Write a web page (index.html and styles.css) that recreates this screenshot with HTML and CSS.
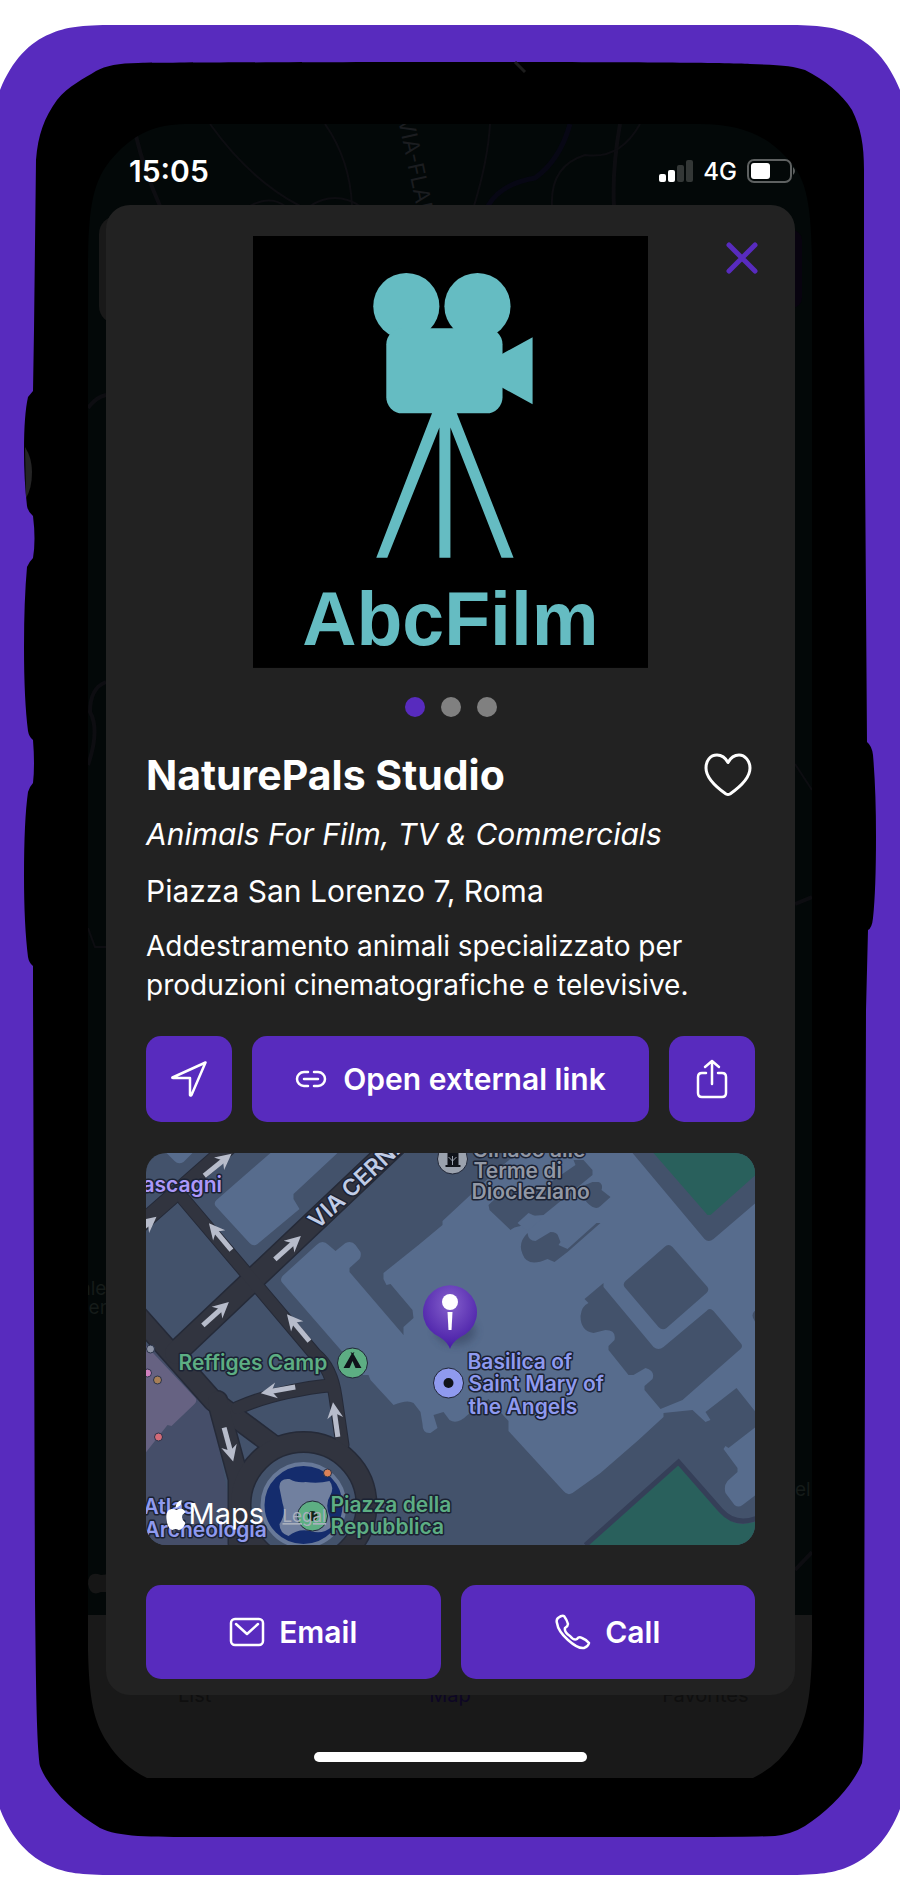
FILE: index.html
```html
<!DOCTYPE html>
<html lang="en">
<head>
<meta charset="utf-8">
<meta name="viewport" content="width=device-width, initial-scale=1">
<title>NaturePals Studio</title>
<link rel="stylesheet" href="styles.css">
</head>
<body>
<div class="stage">
  <svg class="device" viewBox="0 0 900 1900" preserveAspectRatio="none" aria-hidden="true">
    <path fill="#582bbe" d="M0 90C12 60 30 42 50 34C66 27 80 25 115 25H785C820 25 834 27 850 34C870 42 888 60 900 90V1809C888 1840 870 1857 850 1866C834 1873 820 1875 785 1875H115C80 1875 66 1873 50 1866C30 1857 12 1840 0 1809Z"/>
    <path fill="#000" d="M138 63C250 62 700 61 750 64C780 65 794 66 805 70C825 80 842 94 852 110C861 128 864 145 864 170V320L867 742Q872 746 873 755Q876 790 876 836Q876 890 873 918Q872 928 868 930L866 1010L864 1700Q864 1745 862 1763C853 1785 830 1810 805 1826Q792 1834 775 1836Q750 1837 700 1837H200C150 1837 118 1837 100 1828C70 1810 48 1787 40 1766C37 1745 36 1700 35 1600L33 990V966Q29 963 28 957Q24 925 24 876Q24 820 28 792Q30 786 33 783Q35 765 33 740Q29 737 28 731Q24 700 24 647Q24 600 27 567Q29 562 33 558Q36 540 33 516Q28 512 27 506Q24 480 24 450Q24 415 28 397L33 391L34 330L36 160C38 135 44 118 57 100C68 86 85 78 96 71Q110 63 138 63Z"/>
    <path fill="#242424" d="M25 447Q32 458 32 472Q32 488 26 498Z"/>
    <path stroke="#1c1c1c" stroke-width="3" d="M515 62L525 72"/>
    <clipPath id="glass"><path d="M190 124H700C740 124 765 135 785 156C806 176 811 200 812 260V1650C811 1700 806 1722 793 1742Q778 1766 753 1778H147Q122 1766 107 1742C94 1722 89 1700 88 1650V260C89 200 94 176 118 152C140 130 160 124 190 124Z"/></clipPath>
    <g clip-path="url(#glass)">
      <rect x="88" y="124" width="724" height="1500" fill="#030808"/>
      <g fill="none" stroke="#0d0d11" stroke-width="2">
        <path stroke-width="4" d="M136 136Q144 170 160 206M620 124Q612 170 614 206M88 408Q96 397 106 395M106 682Q90 688 90 712Q100 730 88 765M795 904L812 897M795 1570L812 1552"/>
        <path d="M210 124Q250 180 300 206M325 124Q350 160 352 206M490 124Q488 160 474 206M640 124Q620 160 585 155Q550 166 552 206M250 206Q270 195 285 206M310 206Q335 190 360 206M88 928L95 947H106M795 764L812 790"/>
        <path stroke="#070714" stroke-width="5" d="M570 124Q560 160 535 178Q500 184 488 206"/>
      </g>
      <text class="street" transform="translate(398 120) rotate(78)">VIA-FLAMINIA</text>
      <rect x="99" y="216" width="40" height="108" rx="18" fill="#191919"/>
      <rect x="780" y="230" width="22" height="78" rx="10" fill="#08030f"/>
      <text class="faint-place" x="80" y="1295">ale</text>
      <text class="faint-place" x="84" y="1314">len</text>
      <text class="faint-place" x="795" y="1496">el</text>
      <path fill="#161616" d="M101 1575Q88 1570 88 1584Q90 1597 101 1592H110V1574Z"/>
      <rect x="88" y="1615" width="724" height="170" fill="#191919"/>
    </g>
  </svg>

  <header class="status">
    <time class="clock">15:05</time>
    <div class="signals">
      <svg width="34" height="22" viewBox="0 0 34 22" aria-hidden="true"><rect y="14" width="7" height="8" rx="2" fill="#fff"/><rect x="9" y="10" width="7" height="12" rx="2" fill="#fff"/><rect x="18" y="5" width="7" height="17" rx="2" fill="#333736"/><rect x="27" y="0" width="7" height="22" rx="2" fill="#333736"/></svg>
      <span>4G</span>
      <svg width="50" height="24" viewBox="0 0 50 24" aria-hidden="true"><rect x="1" y="1" width="43" height="22" rx="6" fill="none" stroke="#5e6161" stroke-width="2"/><rect x="4" y="4" width="19" height="16" rx="3" fill="#fff"/><path fill="#5e6161" d="M46 8Q50 12 46 16Z"/></svg>
    </div>
  </header>

  <main class="sheet">
    <div class="gallery">
      <svg class="logo" viewBox="0 0 395 431" role="img" aria-label="AbcFilm">
        <rect width="395" height="431" fill="#000"/>
        <g fill="#65bcc2">
          <circle cx="153" cy="70" r="33"/><circle cx="224" cy="70" r="33"/>
          <rect x="133" y="92" width="116" height="85" rx="16"/>
          <path d="M248 118L279 101V168L248 151ZM179 176H203L260 321H248L197 191V321H186V191L134 321H123Z"/>
          <text class="wordmark" x="197" y="408" text-anchor="middle">AbcFilm</text>
        </g>
      </svg>
      <button class="close" type="button" aria-label="Close"><svg width="32" height="32" viewBox="0 0 32 32"><path d="M3 3L29 29M29 3L3 29" stroke="#582bbe" stroke-width="5" stroke-linecap="round"/></svg></button>
    </div>
    <div class="dots"><i class="dot dot-on"></i><i class="dot"></i><i class="dot"></i></div>

    <div class="title-row">
      <h1>NaturePals Studio</h1>
      <button class="heart" type="button" aria-label="Add to favorites"><svg width="48" height="44" viewBox="0 0 48 44"><path d="M24 9.500C21 4 17 2 13 2C6 2 2 8 2 15C2 25 12 34 22 41Q24 42 26 41C36 34 46 25 46 15C46 8 41 2 35 2C31 2 27 4 24 9.500Z" fill="none" stroke="#fff" stroke-width="3" stroke-linejoin="round"/></svg></button>
    </div>
    <p class="category">Animals For Film, TV &amp; Commercials</p>
    <p class="address">Piazza San Lorenzo 7, Roma</p>
    <p class="about">Addestramento animali specializzato per produzioni cinematografiche e televisive.</p>

    <div class="actions">
      <button class="btn" type="button" aria-label="Directions"><svg width="36" height="36" viewBox="0 0 36 36"><path d="M34.500 1.500L1.500 16.500Q1 17 2 17H19V34Q20 35 20.500 34Z" fill="none" stroke="#fff" stroke-width="2.500" stroke-linejoin="round"/></svg></button>
      <button class="btn" type="button"><svg width="32" height="18" viewBox="0 0 32 18"><path d="M13 2H9A7 7 0 0 0 9 16H13M19 2H23A7 7 0 0 1 23 16H19M9 9H23" fill="none" stroke="#fff" stroke-width="2.500" stroke-linecap="round"/></svg>Open external link</button>
      <button class="btn" type="button" aria-label="Share"><svg width="32" height="40" viewBox="0 0 32 40"><path d="M10 14H6Q2 14 2 18V34Q2 38 6 38H26Q30 38 30 34V18Q30 14 26 14H22M16 25V2M9 8L16 2L23 8" fill="none" stroke="#fff" stroke-width="2.500" stroke-linecap="round" stroke-linejoin="round"/></svg></button>
    </div>

    <svg class="map" viewBox="0 0 610 392" preserveAspectRatio="xMidYMid slice" role="img" aria-label="Map of Piazza della Repubblica">
      <defs>
        <radialGradient id="pin" cx="50%" cy="30%" r="65%"><stop offset="0" stop-color="#8560cc"/><stop offset="1" stop-color="#4a1fa8"/></radialGradient>
        <filter id="soft" x="-50%" y="-50%" width="200%" height="200%"><feGaussianBlur stdDeviation="4"/></filter>
        <g id="arrow"><path d="M-17 0H10" stroke="#b7bccb" stroke-width="5"/><path d="M18 0L2 -8L7 0L2 8Z" fill="#b7bccb"/></g>
      </defs>
      <rect width="610" height="392" fill="#43526b"/>
      <g fill="#576c8d">
        <path d="M21 0H47L38 9Q33 12 29 8ZM125 0H192L148 41V46L154 56L112 91Q108 94 104 90L70 53Q68 50 71 47Z"/>
        <path d="M137 123L171 92Q177 86 183 92L190 98L200 90Q206 87 210 92L215 99Q216 103 214 106L204 115V119L258 182V174L268 165L267 157L245 131L241 132L238 126V120L273 92L297 72V68L355 14L372 0H487L559 86Q563 90 568 86L610 50V259L591 235L560 259L565 267L560 269L547 257L518 260V264L493 287L455 320L427 340Q422 343 418 338L363 278V268L343 246L322 262Q312 272 304 267L298 259L288 262L292 275L285 280Q277 281 277 271L275 259L268 250Q262 246 248 252L225 227L223 222L217 222L137 130Q134 127 137 123Z"/>
        <path d="M610 274L583 295L580 293L578 296L592 315V319L582 328Q578 333 580 340L589 352Q593 355 597 352L610 342Z"/>
      </g>
      <g fill="#43526b">
        <path d="M343 52L362 34L398 34L430 12L428 7H438L447 17V22L398 62L385 63L375 73Q368 74 365 77L344 57ZM447 29H453Q458 31 456 37L465 44L455 53Q450 58 442 50L430 36ZM382 80Q383 88 390 88L405 79Q412 79 413 84L415 89L413 92L422 96L451 70H455L422 99L409 109L402 106Q382 115 377 101Q372 90 382 80Z"/>
        <path d="M383 60L372 70L382 78L396 66Z" fill="#576c8d"/>
        <path d="M519 94Q523 90 527 94L562 134Q564 137 561 140L521 175Q517 178 513 174L479 134Q477 131 480 128ZM458 130V134L508 194Q513 198 518 194L561 158Q564 154 568 158L595 190Q598 193 595 196L537 247L515 256L499 237V233L507 226Q510 218 500 215L488 222H483L463 197V193L469 187Q471 177 460 177L448 180Q435 178 435 163Q436 153 443 150L439 146Z"/>
        <path d="M610 157Q604 162 610 169Z"/>
      </g>
      <g fill="#29605c"><path d="M508 0H610V22L565 62H562ZM443 392L533 312L572 357Q585 371 597 371L610 369V392Z"/></g>
      <path d="M440 392L533 309L575 357Q590 374 612 365" fill="none" stroke="#353f58" stroke-width="5"/>
      <path d="M0 190L64 247L80 330L90 392H0Z" fill="#454e69"/>
      <path d="M0 192L50 245Q52 248 49 251L26 273L22 272L0 300Z" fill="#666282"/>
      <g fill="none" stroke-linecap="round" stroke-linejoin="round">
        <g stroke="#252a38">
          <path stroke-width="22" d="M-12 158L68 248L130 294"/><path stroke-width="24" d="M30 200L254 -12"/><path stroke-width="17" d="M-8 74L90 -12"/><path stroke-width="14" d="M38 46L110 131L170 202Q186 215 190 244L197 292M187 232Q130 238 92 255"/><path stroke-width="22" d="M72 248L93 326V390"/><circle cx="158" cy="352" r="63" stroke-width="22"/>
        </g>
        <g stroke="#31343f">
          <path stroke-width="19" d="M-12 158L68 248L130 294"/><path stroke-width="21" d="M30 200L254 -12"/><path stroke-width="15" d="M-8 74L90 -12"/><path stroke-width="12" d="M38 46L110 131L170 202Q186 215 190 244L197 292M187 232Q130 238 92 255"/><path stroke-width="19" d="M72 248L93 326V390"/><circle cx="158" cy="352" r="63" stroke-width="19"/>
        </g>
      </g>
      <circle cx="158" cy="352" r="41" fill="#142c6d" stroke="#687998" stroke-width="4"/>
      <path fill="#71809f" d="M134 335Q133 325 144 326Q151 330 160 329Q173 331 184 328Q189 334 185 342Q179 351 184 363L186 374Q177 382 165 378Q153 375 143 383Q134 380 134 371Q141 361 137 350Z"/>
      <use href="#arrow" transform="translate(72 12) rotate(-39)"/><use href="#arrow" transform="translate(-3 75) rotate(-39)"/>
      <use href="#arrow" transform="translate(75 84) rotate(-130)"/><use href="#arrow" transform="translate(142 95) rotate(-42)"/>
      <use href="#arrow" transform="translate(70 161) rotate(-42)"/><use href="#arrow" transform="translate(153 175) rotate(-130)"/>
      <use href="#arrow" transform="translate(133 237) rotate(170)"/><use href="#arrow" transform="translate(83 291) rotate(75)"/><use href="#arrow" transform="translate(190 267) rotate(-98)"/>
      <g stroke="#29334a"><circle cx="5" cy="196" r="4" fill="#8c93a5"/><circle cx="2" cy="220" r="4" fill="#cf80be"/><circle cx="12" cy="227" r="4" fill="#a87f56"/><circle cx="13" cy="284" r="4" fill="#d46b78"/><circle cx="182" cy="320" r="4" fill="#dc8157"/></g>
      <g stroke="#202637"><circle cx="307" cy="6" r="15" fill="#9ba2ae"/><circle cx="207" cy="210" r="15" fill="#5dae83"/><circle cx="303" cy="230" r="15" fill="#8f9aef"/><circle cx="167" cy="363" r="15" fill="#5dae83"/></g>
      <path d="M300 14H315V12H313V0H302V12H300ZM198 215L206 201L205 199L207 200L209 199L208 201L216 215Z" fill="#10131a"/><path d="M307 12V3M303 4L307 8L311 4" stroke="#9ba2ae" fill="none"/><path fill="#5dae83" d="M204 215L207 208L210 215Z"/>
      <circle cx="303" cy="230" r="5" fill="#10131a"/><circle cx="167" cy="363" r="5" fill="#10251a"/>
      <g class="labels">
        <text x="-3" y="39" fill="#ac98fa">ascagni</text>
        <text class="road" x="172" y="77" transform="rotate(-43 172 77)">VIA CERNAIA</text>
        <g fill="#9298a5"><text x="327" y="4">Ciriaco alle</text><text x="328" y="25">Terme di</text><text x="326" y="46">Diocleziano</text></g>
        <text x="33" y="217" fill="#5dae83">Reffiges Camp</text>
        <g fill="#8f9aef"><text x="322" y="216">Basilica of</text><text x="323" y="238">Saint Mary of</text><text x="323" y="261">the Angels</text><text x="-2" y="361">Atlas</text><text x="-1" y="384">Archeologia</text></g>
        <g fill="#5dae83"><text x="185" y="359">Piazza della</text><text x="185" y="381">Repubblica</text></g>
      </g>
      <text class="legal" x="137" y="369" text-decoration="underline">Legal</text>
      <path fill="#fff" d="M31 357Q34 355 37 356Q39 357 40 359Q33 364 40 370Q37 377 33 377Q30 375 27 377Q22 376 21 366Q20 357 26 356Q29 356 31 357ZM30 355Q30 349 36 347Q37 353 30 355Z"/>
      <text class="brand" x="43" y="371">Maps</text>
      <ellipse cx="310" cy="178" rx="20" ry="14" fill="#26314b" opacity=".4" filter="url(#soft)"/>
      <path fill="url(#pin)" d="M304.500 196Q302 189 294 184A27 27 0 1 1 315 184Q307 189 304.500 196Z"/>
      <circle cx="304.500" cy="149" r="8" fill="#fff"/><path fill="#fff" d="M302 159H307L306 177H303Z"/>
    </svg>

    <div class="contacts">
      <button class="btn" type="button"><svg width="36" height="30" viewBox="0 0 36 30"><rect x="2" y="2" width="32" height="26" rx="4" fill="none" stroke="#fff" stroke-width="2.500"/><path d="M7 7L18 17L29 7" fill="none" stroke="#fff" stroke-width="2.500" stroke-linecap="round" stroke-linejoin="round"/></svg>Email</button>
      <button class="btn" type="button"><svg width="36" height="36" viewBox="0 0 36 36"><path d="M3 4Q7 1 9 2Q12 6 13 10Q13 12 10 14Q9 18 15 22Q19 27 22 25Q24 22 27 24Q32 26 34 29Q33 33 29 34Q23 35 13 26Q3 17 2 9Q1 6 3 4Z" fill="none" stroke="#fff" stroke-width="2.500" stroke-linejoin="round"/></svg>Call</button>
    </div>
  </main>
  <nav class="tabs" aria-label="Tabs"><span>List</span><span class="tab-on">Map</span><span>Favorites</span></nav>
  <div class="home"></div>
</div>
</body>
</html>
```
FILE: styles.css
```css
* { box-sizing: border-box; }
body { margin: 0; background: #fff; color: #fff; font-family: Inter, Roboto, sans-serif; }
h1, p { margin: 0; }
button { margin: 0; padding: 0; border: 0; background: none; color: inherit; font: inherit; }
button svg { display: block; flex: none; }

.stage { position: relative; min-height: 100vh; padding: 152px 0 138px; overflow: hidden; }
.device { position: absolute; inset: 0; width: 100%; height: 100%; z-index: -1; }
.street { fill: #1b1d20; font-size: 22px; }
.faint-place { fill: #151b19; font-size: 19px; }

.status { display: flex; justify-content: space-between; align-items: center; height: 38px; margin: 0 103px 0 129px; }
.clock { font-size: 30px; font-weight: 600; }
.signals { display: flex; align-items: center; gap: 10px; font-size: 24px; font-weight: 500; }

.sheet { position: relative; margin: 15px 105px 0 106px; padding: 31px 40px 16px; background: #222; border-radius: 24px; }
.gallery { display: flex; justify-content: center; }
.logo { display: block; width: 65%; height: auto; }
.wordmark { font-family: "Liberation Sans", Arial, sans-serif; font-weight: 700; font-size: 75px; }
.close { position: absolute; top: 37px; right: 37px; }
.dots { display: flex; justify-content: center; gap: 16px; margin-top: 29px; }
.dot { width: 20px; height: 20px; border-radius: 50%; background: #808080; }
.dot-on { background: #582bbe; }

.title-row { display: flex; justify-content: space-between; align-items: center; height: 48px; margin-top: 34px; }
h1 { font-size: 41px; font-weight: 700; }
.heart { margin-right: 3px; }
.category, .address { font-size: 30px; line-height: 40px; }
.category { margin-top: 15px; font-style: italic; }
.address { margin-top: 17px; }
.about { margin-top: 16px; font-size: 28px; line-height: 39px; }

.actions { display: grid; grid-template-columns: 86px 1fr 86px; gap: 20px; margin-top: 31px; }
.btn { display: flex; align-items: center; justify-content: center; gap: 16px; background: #582bbe; border-radius: 15px; font-size: 30px; font-weight: 600; }
.actions .btn { height: 86px; }
.map { display: block; width: 100%; height: 392px; margin-top: 31px; border-radius: 20px; }
.labels text { font-size: 21px; font-weight: 600; stroke: #1b2233; stroke-width: 3px; paint-order: stroke; stroke-linejoin: round; }
.labels .road { fill: #c0cce6; font-size: 23px; font-weight: 600; }
.legal { fill: #a9b0bd; font-size: 17px; }
.brand { fill: #fff; font-size: 29px; }
.contacts { display: grid; grid-template-columns: 1fr 1fr; gap: 20px; margin-top: 40px; }
.contacts .btn { height: 94px; gap: 14px; }

.tabs { display: grid; grid-template-columns: 1fr 1fr 1fr; height: 18px; margin: -9px 67px; color: #0f0f0f; font-size: 20px; line-height: 18px; text-align: center; position: relative; z-index: -1; }
.tab-on { color: #0d0624; }
.home { width: 273px; height: 10px; margin: 57px auto 0; border-radius: 5px; background: #fff; }
```
